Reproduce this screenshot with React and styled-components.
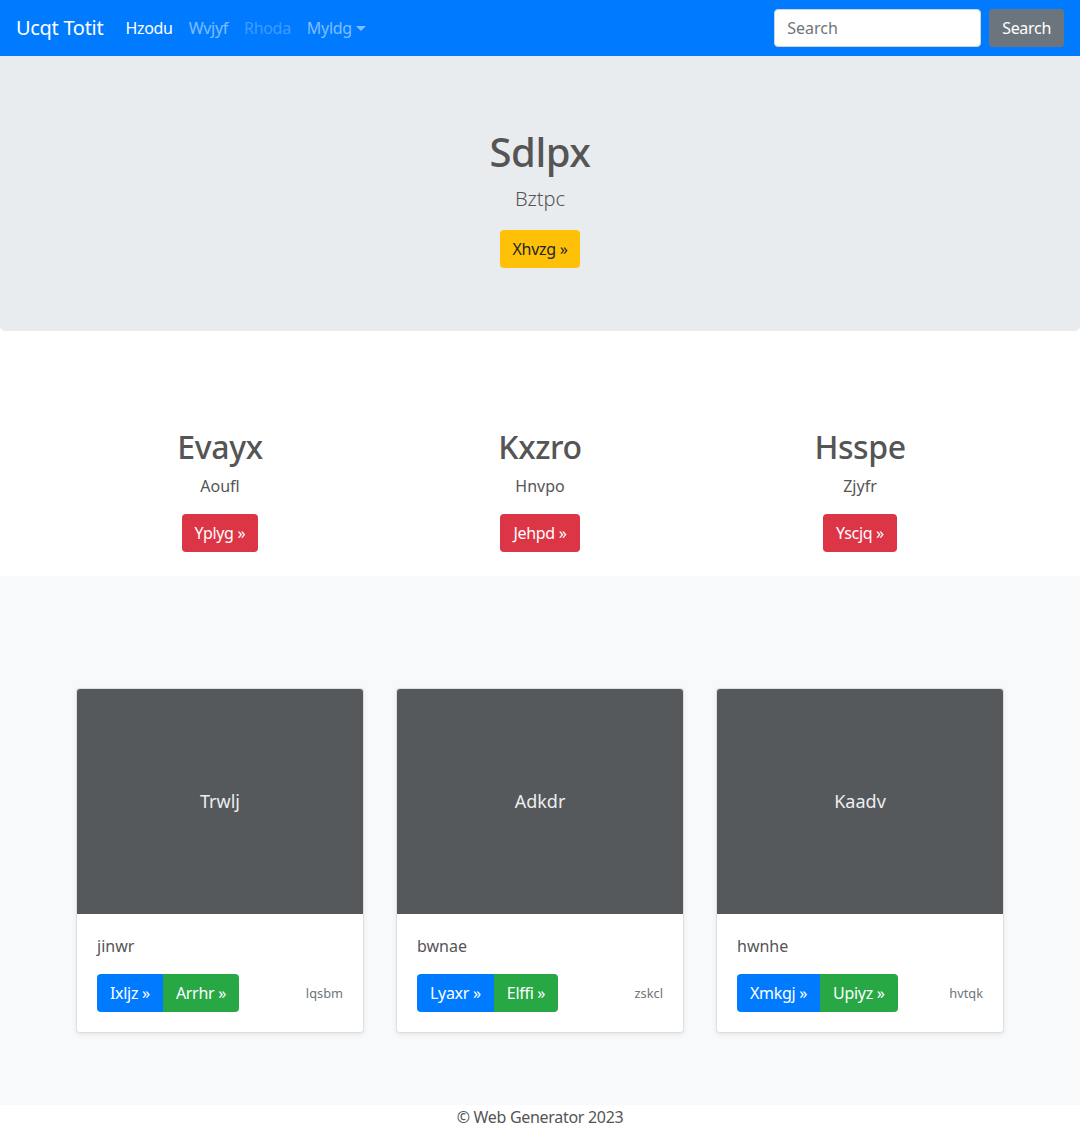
import React from 'react';
import styled, { createGlobalStyle } from 'styled-components';

const GlobalStyle = createGlobalStyle`
  * { box-sizing: border-box; }
  body {
    margin: 0;
    font-family: "Segoe UI", "Noto Sans", "Open Sans", Arial, sans-serif;
    font-size: 16px;
    line-height: 1.5;
    color: #555;
    background: #fff;
  }
  h1, h2, p { margin-top: 0; }
`;

const NavBar = styled.nav`
  background: #007bff;
  height: 56px;
  display: flex;
  align-items: center;
  padding: 8px 16px;
`;

const Brand = styled.a`
  color: #fff;
  font-size: 20px;
  line-height: 30px;
  margin-right: 14px;
  text-decoration: none;
  letter-spacing: -0.3px;
`;

const NavLinks = styled.div`
  display: flex;
  flex: 1;
`;

const NavLink = styled.a`
  padding: 8px;
  color: ${(p) =>
    p.$active ? '#fff' : p.$disabled ? 'rgba(255,255,255,0.25)' : 'rgba(255,255,255,0.5)'};
  text-decoration: none;
  display: inline-flex;
  align-items: center;
  letter-spacing: -0.3px;
`;

const Caret = styled.span`
  display: inline-block;
  margin-left: 4px;
  border-top: 5px solid currentColor;
  border-left: 5px solid transparent;
  border-right: 5px solid transparent;
  margin-top: 1px;
`;

const SearchForm = styled.form`
  display: flex;
  align-items: center;
  gap: 8px;
`;

const SearchInput = styled.input`
  width: 207px;
  height: 38px;
  padding: 6px 12px;
  font: inherit;
  color: #495057;
  border: 1px solid #ced4da;
  border-radius: 4px;
  &::placeholder { color: #6c757d; }
`;

const Btn = styled.button`
  font: inherit;
  font-size: 16px;
  line-height: 24px;
  padding: 6px 12px;
  border: 1px solid transparent;
  border-radius: 4px;
  letter-spacing: -0.3px;
  color: ${(p) => (p.$variant === 'warning' ? '#212529' : '#fff')};
  background: ${(p) =>
    ({
      secondary: '#6c757d',
      warning: '#ffc107',
      danger: '#dc3545',
      primary: '#007bff',
      success: '#28a745',
    })[p.$variant]};
  cursor: pointer;
`;

const Jumbotron = styled.section`
  background: #e9ecef;
  border-radius: 0 0 5px 5px;
  padding: 72px 32px 63px;
  text-align: center;
`;

const Title = styled.h1`
  font-size: 40px;
  font-weight: 500;
  line-height: 1.2;
  margin-bottom: 8px;
  letter-spacing: -0.5px;
`;

const Lead = styled.p`
  font-size: 20px;
  font-weight: 300;
  margin-bottom: 16px;
`;

const Features = styled.section`
  padding: 97px 0 24px;
`;

const Container = styled.div`
  width: 960px;
  margin: 0 auto;
  display: grid;
  grid-template-columns: repeat(3, 1fr);
`;

const Feature = styled.div`
  padding: 0 15px;
  text-align: center;
`;

const FeatureTitle = styled.h2`
  font-size: 32px;
  font-weight: 500;
  line-height: 1.2;
  margin-bottom: 8px;
  letter-spacing: -0.4px;
`;

const FeatureText = styled.p`
  margin-bottom: 16px;
`;

const Album = styled.section`
  background: #f8f9fa;
  padding: 112px 0 48px;
`;

const CardCol = styled.div`
  padding: 0 15px;
`;

const Card = styled.div`
  background: #fff;
  border: 1px solid rgba(0, 0, 0, 0.125);
  border-radius: 4px;
  box-shadow: 0 2px 4px rgba(0, 0, 0, 0.075);
  overflow: hidden;
  margin: 0 1px 24px;
`;

const Thumb = styled.div`
  height: 225px;
  background: #55595c;
  color: #eceeef;
  font-size: 18px;
  display: flex;
  align-items: center;
  justify-content: center;
`;

const CardBody = styled.div`
  padding: 20px;
`;

const CardText = styled.p`
  margin-bottom: 16px;
`;

const CardFooterRow = styled.div`
  display: flex;
  justify-content: space-between;
  align-items: center;
`;

const BtnGroup = styled.div`
  display: inline-flex;
  & > button:not(:first-child) { border-top-left-radius: 0; border-bottom-left-radius: 0; }
  & > button:not(:last-child) { border-top-right-radius: 0; border-bottom-right-radius: 0; }
`;

const Muted = styled.small`
  font-size: 12.8px;
  color: #6c757d;
`;

const Footer = styled.footer`
  text-align: center;
  line-height: 24px;
  letter-spacing: -0.3px;
`;

const features = [
  { title: 'Evayx', text: 'Aoufl', btn: 'Yplyg' },
  { title: 'Kxzro', text: 'Hnvpo', btn: 'Jehpd' },
  { title: 'Hsspe', text: 'Zjyfr', btn: 'Yscjq' },
];

const cards = [
  { thumb: 'Trwlj', text: 'jinwr', a: 'Ixljz', b: 'Arrhr', note: 'lqsbm' },
  { thumb: 'Adkdr', text: 'bwnae', a: 'Lyaxr', b: 'Elffi', note: 'zskcl' },
  { thumb: 'Kaadv', text: 'hwnhe', a: 'Xmkgj', b: 'Upiyz', note: 'hvtqk' },
];

export default function App() {
  return (
    <>
      <GlobalStyle />
      <NavBar>
        <Brand href="#">Ucqt Totit</Brand>
        <NavLinks>
          <NavLink $active href="#">Hzodu</NavLink>
          <NavLink href="#">Wvjyf</NavLink>
          <NavLink $disabled href="#">Rhoda</NavLink>
          <NavLink href="#">
            Myldg <Caret />
          </NavLink>
        </NavLinks>
        <SearchForm onSubmit={(e) => e.preventDefault()}>
          <SearchInput placeholder="Search" />
          <Btn $variant="secondary">Search</Btn>
        </SearchForm>
      </NavBar>

      <Jumbotron>
        <Title>Sdlpx</Title>
        <Lead>Bztpc</Lead>
        <Btn $variant="warning">Xhvzg »</Btn>
      </Jumbotron>

      <Features>
        <Container>
          {features.map((f) => (
            <Feature key={f.title}>
              <FeatureTitle>{f.title}</FeatureTitle>
              <FeatureText>{f.text}</FeatureText>
              <Btn $variant="danger">{f.btn} »</Btn>
            </Feature>
          ))}
        </Container>
      </Features>

      <Album>
        <Container>
          {cards.map((c) => (
            <CardCol key={c.thumb}>
              <Card>
                <Thumb>{c.thumb}</Thumb>
                <CardBody>
                  <CardText>{c.text}</CardText>
                  <CardFooterRow>
                    <BtnGroup>
                      <Btn $variant="primary">{c.a} »</Btn>
                      <Btn $variant="success">{c.b} »</Btn>
                    </BtnGroup>
                    <Muted>{c.note}</Muted>
                  </CardFooterRow>
                </CardBody>
              </Card>
            </CardCol>
          ))}
        </Container>
      </Album>

      <Footer>© Web Generator 2023</Footer>
    </>
  );
}
